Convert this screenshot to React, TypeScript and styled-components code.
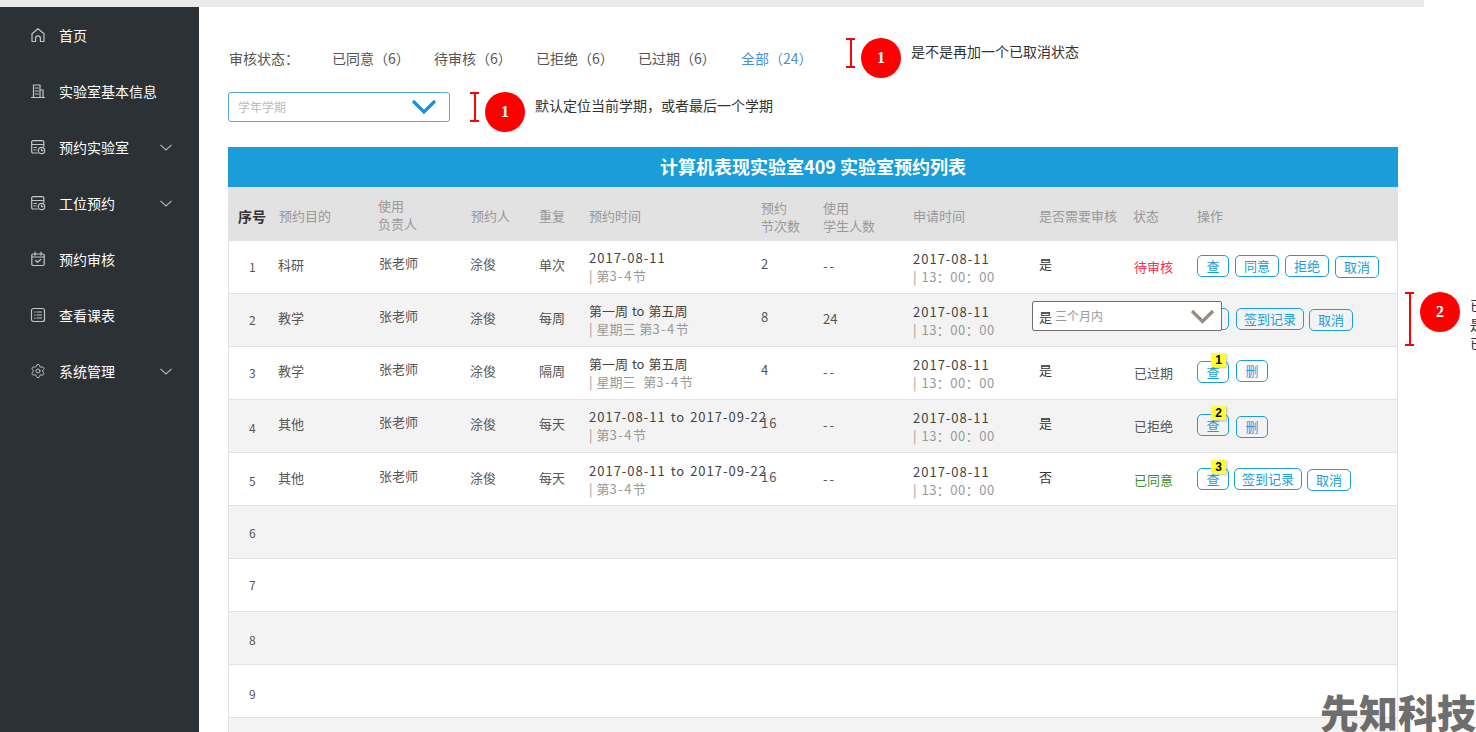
import React from 'react';
import styled, { createGlobalStyle } from 'styled-components';
import { Settings } from 'lucide-react';

const GlobalStyle = createGlobalStyle`
    html, body {
        margin: 0;
        height: 100%;
        overflow: hidden;
        background: #fff;
    }
    body {
        font-family: 'Noto Sans CJK SC', 'Noto Sans', sans-serif;
        color: #444;
    }
`;

const Page = styled.div`
    position: relative;
    height: 732px;
    width: 1476px;
    overflow: hidden;
`;

const TopBar = styled.div`
    width: 1424px;
    height: 7px;
    background: #e9e9e9;
`;

const Body = styled.div`
    display: flex;
    height: 725px;
`;

const Sidebar = styled.nav`
    flex: 0 0 199px;
    background: #2b3134;
`;

const NavItem = styled.div`
    display: flex;
    align-items: center;
    height: 56px;
    padding: 0 27px 0 30px;
    color: #fff;
    font-size: 14px;
`;

const NavIcon = styled.span`
    display: flex;
    width: 16px;
    margin-right: 13px;
    color: #c4c6c7;
`;

const NavChevron = styled.svg`
    margin-left: auto;
    width: 12px;
    height: 7px;
`;

const Main = styled.main`
    flex: 1;
    padding: 31px 0 0 29px;
`;

const FilterRow = styled.div`
    display: flex;
    align-items: flex-start;
    height: 40px;
`;

const StatusFilters = styled.div`
    display: flex;
    width: 618px;
    padding: 10px 0 0 1px;
    box-sizing: border-box;
    font-size: 14px;
    line-height: 20px;
`;

const StatusItem = styled.span<{ $active?: boolean }>`
    flex: 0 0 102px;
    margin-left: ${(p) => (p.$active ? 1 : 0)}px;
    color: ${(p) => (p.$active ? '#4a90d9' : '#555')};

    &:first-child {
        flex-basis: 103px;
    }
`;

const SelectRow = styled.div`
    display: flex;
    align-items: flex-start;
    height: 40px;
    margin-top: 14px;
`;

const TermSelect = styled.div`
    display: flex;
    align-items: center;
    justify-content: space-between;
    box-sizing: border-box;
    width: 222px;
    height: 30px;
    margin-right: 20px;
    padding: 0 12px 1px 9px;
    border: 1px solid #58a9d8;
    border-radius: 3px;
    color: #bbb;
    font-size: 12px;
`;

const Note = styled.div`
    display: flex;
    align-items: flex-start;
    flex: 0 0 auto;
`;

const NoteBar = styled.div<{ $height: number }>`
    position: relative;
    box-sizing: border-box;
    width: 9px;
    height: ${(p) => p.$height}px;
    margin-right: 6px;
    border-top: 2px solid #f00;
    border-bottom: 2px solid #f00;

    &::before {
        content: '';
        position: absolute;
        top: 0;
        bottom: 0;
        left: 3.5px;
        width: 2px;
        background: #f00;
    }
`;

const NoteDot = styled.div`
    display: flex;
    align-items: center;
    justify-content: center;
    flex: 0 0 40px;
    height: 40px;
    margin-right: 10px;
    border-radius: 50%;
    background: #f00;
    color: #fff;
    font-family: 'Liberation Serif', serif;
    font-size: 16px;
    font-weight: 700;
`;

const NoteText = styled.div`
    margin-top: 3px;
    color: #333;
    font-size: 14px;
    line-height: 20px;
    white-space: nowrap;
`;

const SideNoteText = styled(NoteText)`
    margin-top: 4px;
    line-height: 19px;
`;

const TableArea = styled.div`
    display: flex;
    align-items: flex-start;
    margin-top: 15px;
`;

const SideNote = styled(Note)`
    margin: 145px 0 0 7px;
`;

const Table = styled.section`
    flex: 0 0 1170px;
`;

const TableTitle = styled.h2`
    height: 40px;
    margin: 0;
    background: #1a9dd9;
    color: #fff;
    font-size: 18px;
    font-weight: 700;
    line-height: 38px;
    text-align: center;
`;

const HeadRow = styled.div`
    display: grid;
    grid-template-columns: 50px 99px 93px 68px 50px 172px 62px 90px 126px 94px 64px 200px;
    height: 54px;
    background: #e2e2e2;
    color: #999;
    font-size: 13px;
    line-height: 18px;
`;

const HeadCell = styled.div<{ $top?: number; $lead?: boolean }>`
    padding-top: ${(p) => p.$top ?? 20}px;
    padding-left: ${(p) => (p.$lead ? 10 : 1)}px;
    color: ${(p) => (p.$lead ? '#333' : '#999')};
    font-size: ${(p) => (p.$lead ? 14 : 13)}px;
    font-weight: ${(p) => (p.$lead ? 700 : 400)};
    white-space: pre-line;
`;

const Row = styled.div<{ $striped: boolean }>`
    position: relative;
    display: grid;
    grid-template-columns: 49px 101px 91px 69px 50px 172px 62px 90px 126px 95px 63px 200px;
    box-sizing: border-box;
    height: 53px;
    border: 1px solid #e2e2e2;
    border-width: 0 1px 1px;
    background: ${(p) => (p.$striped ? '#f3f3f3' : '#fff')};
    font-size: 13px;
    line-height: 20px;
`;

const Cell = styled.div<{ $top: number; $color?: string; $lift?: boolean; $spacing?: number }>`
    position: ${(p) => (p.$lift ? 'relative' : 'static')};
    z-index: ${(p) => (p.$lift ? 2 : 'auto')};
    padding-top: ${(p) => p.$top}px;
    color: ${(p) => p.$color ?? '#555'};
    letter-spacing: ${(p) => p.$spacing ?? 0}px;
    white-space: nowrap;
`;

const NumberCell = styled(Cell)`
    padding-left: 20px;
    font-size: 12px;
`;

const TimeCell = styled(Cell)`
    line-height: 18px;
    word-spacing: 1px;
`;

const DateText = styled.span`
    letter-spacing: 1px;
`;

const SubLine = styled.div`
    color: #999;
`;

const SlotRange = styled.span`
    letter-spacing: 1.5px;
`;

const ClockLine = styled(SubLine)`
    letter-spacing: 0.5px;
`;

const Actions = styled.div`
    display: flex;
    align-items: flex-start;
`;

const ActionButton = styled.button<{ $width: number; $top: number; $gap: number }>`
    position: relative;
    box-sizing: border-box;
    flex: 0 0 ${(p) => p.$width}px;
    height: 22px;
    margin: ${(p) => p.$top}px 0 0 ${(p) => p.$gap}px;
    padding: 0;
    border: 1px solid #1a9dd9;
    border-radius: 5px;
    background: transparent;
    color: #1a9dd9;
    font-family: inherit;
    font-size: 13px;
    line-height: 20px;
`;

const Badge = styled.span`
    position: absolute;
    top: -9px;
    left: 13px;
    width: 15px;
    height: 14px;
    background: #ffff33;
    box-shadow: 1px 1px 2px rgba(0, 0, 0, 0.25);
    color: #000;
    font-family: 'Liberation Sans', sans-serif;
    font-size: 12px;
    font-weight: 700;
    line-height: 14px;
    text-align: center;
`;

const RangeSelect = styled.div`
    position: absolute;
    z-index: 1;
    top: 7px;
    left: 803px;
    display: flex;
    align-items: center;
    justify-content: space-between;
    box-sizing: border-box;
    width: 190px;
    height: 30px;
    padding: 0 6px 0 22px;
    border: 1px solid #6f6f6f;
    border-radius: 2px;
    background: #fff;
    color: #999;
    font-size: 12px;
`;

const Watermark = styled.div`
    position: absolute;
    right: 0;
    bottom: -2px;
    color: rgba(70, 70, 70, 0.8);
    font-size: 39px;
    font-weight: 900;
    line-height: 46px;
    white-space: nowrap;
`;

const iconProps = {
    width: 16,
    height: 16,
    viewBox: '0 0 16 16',
    fill: 'none',
    stroke: 'currentColor',
    strokeWidth: 1.2,
    strokeLinecap: 'round' as const,
    strokeLinejoin: 'round' as const,
};

const HomeIcon = () => (
    <svg {...iconProps}>
        <path d="M2 14.5h3.6v-3.2a2.4 2.4 0 0 1 4.8 0v3.2H14V6.8L8 1.8 2 6.8z" />
    </svg>
);

const BuildingIcon = () => (
    <svg {...iconProps}>
        <path d="M1.5 14.5h13M3.5 14.5V2h6.5v12.5M10 7h3v7.5M5.3 5h3M5.3 8h3M5.3 11h3" />
    </svg>
);

const BookingIcon = () => (
    <svg {...iconProps}>
        <path d="M7.5 14H3a1.3 1.3 0 0 1-1.3-1.3V3A1.3 1.3 0 0 1 3 1.7h9.5A1.3 1.3 0 0 1 13.8 3v4.5M1.7 5.5h12M4 8.5h2.5M4 11h2" />
        <circle cx="11.5" cy="11.5" r="3.2" />
        <path d="M11.5 10v1.6h1.3" />
    </svg>
);

const ReviewIcon = () => (
    <svg {...iconProps}>
        <path d="M3 3h10a1.2 1.2 0 0 1 1.2 1.2v9.1a1.2 1.2 0 0 1-1.2 1.2H3a1.2 1.2 0 0 1-1.2-1.2V4.2A1.2 1.2 0 0 1 3 3zM5 1.2v3M11 1.2v3M1.8 6h12.4M5.5 9.5l2 1.8 3.2-2.8" />
    </svg>
);

const ScheduleIcon = () => (
    <svg {...iconProps}>
        <rect x="1.5" y="1.5" width="13" height="13" rx="2" />
        <path d="M4.5 5h.6M7 5h4.5M4.5 8h.6M7 8h4.5M4.5 11h.6M7 11h4.5" />
    </svg>
);

const Chevron = () => (
    <NavChevron viewBox="0 0 12 7" fill="none" stroke="#b9bcbd" strokeWidth="1.1">
        <path d="M.5.8 6 6l5.5-5.2" />
    </NavChevron>
);

const navItems = [
    { label: '首页', icon: <HomeIcon /> },
    { label: '实验室基本信息', icon: <BuildingIcon /> },
    { label: '预约实验室', icon: <BookingIcon />, sub: true },
    { label: '工位预约', icon: <BookingIcon />, sub: true },
    { label: '预约审核', icon: <ReviewIcon /> },
    { label: '查看课表', icon: <ScheduleIcon /> },
    { label: '系统管理', icon: <Settings size={16} strokeWidth={1.4} />, sub: true },
];

const statusItems = ['审核状态：', '已同意（6）', '待审核（6）', '已拒绝（6）', '已过期（6）'];

const headCells = [
    { text: '序号', lead: true },
    { text: '预约目的' },
    { text: '使用\n负责人', top: 10 },
    { text: '预约人' },
    { text: '重复' },
    { text: '预约时间' },
    { text: '预约\n节次数', top: 12 },
    { text: '使用\n学生人数', top: 12 },
    { text: '申请时间' },
    { text: '是否需要审核' },
    { text: '状态' },
    { text: '操作' },
];

type Action = { label: string; width: number; top: number; gap: number; badge?: number };

type Booking = {
    no: number;
    noTop: number;
    personTop: number;
    purpose: string;
    repeat: string;
    time: string;
    weekday: string;
    count: string;
    students: string;
    review: string;
    status: string;
    statusColor: string;
    shift: number;
    actions: Action[];
};

const bookings: Booking[] = [
    {
        no: 1,
        noTop: 16,
        personTop: 13,
        purpose: '科研',
        repeat: '单次',
        time: '2017-08-11',
        weekday: '',
        count: '2',
        students: '--',
        review: '是',
        status: '待审核',
        statusColor: '#f5334f',
        shift: 0,
        actions: [
            { label: '查', width: 32, top: 14, gap: 0 },
            { label: '同意', width: 44, top: 14, gap: 6 },
            { label: '拒绝', width: 44, top: 14, gap: 6 },
            { label: '取消', width: 44, top: 15, gap: 6 },
        ],
    },
    {
        no: 2,
        noTop: 16,
        personTop: 14,
        purpose: '教学',
        repeat: '每周',
        time: '第一周 to 第五周',
        weekday: '星期三 ',
        count: '8',
        students: '24',
        review: '是',
        status: '',
        statusColor: '#555',
        shift: 0,
        actions: [
            { label: '查', width: 32, top: 14, gap: 0 },
            { label: '签到记录', width: 68, top: 14, gap: 7 },
            { label: '取消', width: 44, top: 15, gap: 5 },
        ],
    },
    {
        no: 3,
        noTop: 16,
        personTop: 14,
        purpose: '教学',
        repeat: '隔周',
        time: '第一周 to 第五周',
        weekday: '星期三\u00a0 ',
        count: '4',
        students: '--',
        review: '是',
        status: '已过期',
        statusColor: '#555',
        shift: 0,
        actions: [
            { label: '查', width: 32, top: 14, gap: 0, badge: 1 },
            { label: '删', width: 32, top: 13, gap: 7 },
        ],
    },
    {
        no: 4,
        noTop: 18,
        personTop: 14,
        purpose: '其他',
        repeat: '每天',
        time: '2017-08-11 to 2017-09-22',
        weekday: '',
        count: '16',
        students: '--',
        review: '是',
        status: '已拒绝',
        statusColor: '#555',
        shift: 0,
        actions: [
            { label: '查', width: 32, top: 14, gap: 0, badge: 2 },
            { label: '删', width: 32, top: 16, gap: 7 },
        ],
    },
    {
        no: 5,
        noTop: 18,
        personTop: 15,
        purpose: '其他',
        repeat: '每天',
        time: '2017-08-11 to 2017-09-22',
        weekday: '',
        count: '16',
        students: '--',
        review: '否',
        status: '已同意',
        statusColor: '#3f8f2e',
        shift: 1,
        actions: [
            { label: '查', width: 32, top: 15, gap: 0, badge: 3 },
            { label: '签到记录', width: 68, top: 15, gap: 5 },
            { label: '取消', width: 44, top: 16, gap: 5 },
        ],
    },
];

const emptyRows = [
    { no: 6, top: 17 },
    { no: 7, top: 16 },
    { no: 8, top: 18 },
    { no: 9, top: 19 },
    { no: 10, top: 18 },
];

const App = (): React.ReactElement => (
    <Page>
        <GlobalStyle />
        <TopBar />
        <Body>
            <Sidebar>
                {navItems.map((item) => (
                    <NavItem key={item.label}>
                        <NavIcon>{item.icon}</NavIcon>
                        {item.label}
                        {item.sub && <Chevron />}
                    </NavItem>
                ))}
            </Sidebar>
            <Main>
                <FilterRow>
                    <StatusFilters>
                        {statusItems.map((item) => (
                            <StatusItem key={item}>{item}</StatusItem>
                        ))}
                        <StatusItem $active>全部（24）</StatusItem>
                    </StatusFilters>
                    <Note>
                        <NoteBar $height={30} />
                        <NoteDot>1</NoteDot>
                        <NoteText>是不是再加一个已取消状态</NoteText>
                    </Note>
                </FilterRow>
                <SelectRow>
                    <TermSelect>
                        学年学期
                        <svg width="26" height="16" viewBox="0 0 26 16" fill="none" stroke="#1a90e0" strokeWidth="3.2">
                            <path d="M2 2l11 11L24 2" />
                        </svg>
                    </TermSelect>
                    <Note>
                        <NoteBar $height={30} />
                        <NoteDot>1</NoteDot>
                        <NoteText>默认定位当前学期，或者最后一个学期</NoteText>
                    </Note>
                </SelectRow>
                <TableArea>
                    <Table>
                        <TableTitle>计算机表现实验室409 实验室预约列表</TableTitle>
                        <HeadRow>
                            {headCells.map((cell) => (
                                <HeadCell key={cell.text} $top={cell.top} $lead={cell.lead}>
                                    {cell.text}
                                </HeadCell>
                            ))}
                        </HeadRow>
                        {bookings.map((row) => (
                            <Row key={row.no} $striped={row.no % 2 === 0}>
                                <NumberCell $top={row.noTop}>{row.no}</NumberCell>
                                <Cell $top={14 + row.shift}>{row.purpose}</Cell>
                                <Cell $top={12 + row.shift}>张老师</Cell>
                                <Cell $top={row.personTop}>涂俊</Cell>
                                <Cell $top={14 + row.shift}>{row.repeat}</Cell>
                                <TimeCell $top={8 + row.shift} $color="#444">
                                    {/^\d/.test(row.time) ? <DateText>{row.time}</DateText> : row.time}
                                    <SubLine>
                                        | {row.weekday}第<SlotRange>3-4</SlotRange>节
                                    </SubLine>
                                </TimeCell>
                                <Cell $top={13 + row.shift} $spacing={1}>
                                    {row.count}
                                </Cell>
                                <Cell $top={15 + row.shift} $spacing={row.students === '--' ? 2 : 0}>
                                    {row.students}
                                </Cell>
                                <TimeCell $top={9 + row.shift} $color="#444">
                                    <DateText>2017-08-11</DateText>
                                    <ClockLine>| 13：00：00</ClockLine>
                                </TimeCell>
                                <Cell $top={13 + row.shift} $color="#333" $lift>
                                    {row.review}
                                </Cell>
                                <Cell $top={16 + row.shift} $color={row.statusColor}>
                                    {row.status}
                                </Cell>
                                <Actions>
                                    {row.actions.map((action) => (
                                        <ActionButton
                                            key={action.label}
                                            $width={action.width}
                                            $top={action.top}
                                            $gap={action.gap}
                                        >
                                            {action.label}
                                            {action.badge && <Badge>{action.badge}</Badge>}
                                        </ActionButton>
                                    ))}
                                </Actions>
                                {row.no === 2 && (
                                    <RangeSelect>
                                        三个月内
                                        <svg width="25" height="15" viewBox="0 0 25 15" fill="none" stroke="#9a8a80" strokeWidth="3.2">
                                            <path d="M2 2l10.5 10.5L23 2" />
                                        </svg>
                                    </RangeSelect>
                                )}
                            </Row>
                        ))}
                        {emptyRows.map((row) => (
                            <Row key={row.no} $striped={row.no % 2 === 0}>
                                <NumberCell $top={row.top}>{row.no}</NumberCell>
                            </Row>
                        ))}
                    </Table>
                    <SideNote>
                        <NoteBar $height={54} />
                        <NoteDot>2</NoteDot>
                        <SideNoteText>
                            已过期
                            <br />
                            是否
                            <br />
                            已取消
                        </SideNoteText>
                    </SideNote>
                </TableArea>
            </Main>
        </Body>
        <Watermark>先知科技</Watermark>
    </Page>
);

export default App;
